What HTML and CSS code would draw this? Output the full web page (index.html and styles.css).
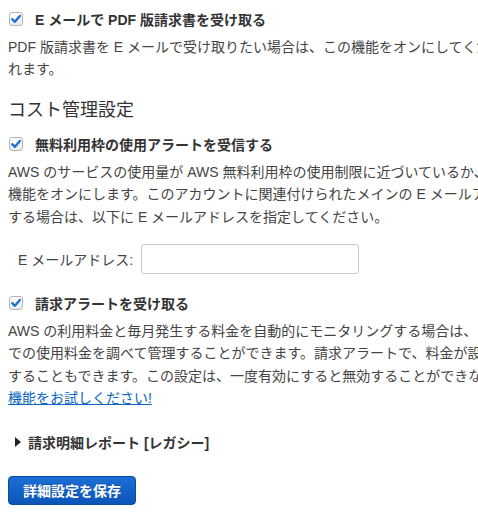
FILE: index.html
```html
<!DOCTYPE html>
<html lang="ja">
<head>
<meta charset="utf-8">
<title>請求設定</title>
<link rel="stylesheet" href="styles.css">
</head>
<body>
<div class="page">
  <label class="check-row">
    <span class="cb"><svg viewBox="0 0 14 14" width="14" height="14"><path d="M3.2 7.2 L5.9 9.8 L10.9 3.9" fill="none" stroke="#1a6fd8" stroke-width="2.3" stroke-linecap="round" stroke-linejoin="round"/></svg></span>
    <span class="check-label">E メールで PDF 版請求書を受け取る</span>
  </label>
  <p class="desc">PDF 版請求書を E メールで受け取りたい場合は、この機能をオンにしてください。PDF 版請求書は毎月 E メールで送信さ<br>れます。</p>

  <h2 class="section-title">コスト管理設定</h2>

  <label class="check-row second">
    <span class="cb"><svg viewBox="0 0 14 14" width="14" height="14"><path d="M3.2 7.2 L5.9 9.8 L10.9 3.9" fill="none" stroke="#1a6fd8" stroke-width="2.3" stroke-linecap="round" stroke-linejoin="round"/></svg></span>
    <span class="check-label">無料利用枠の使用アラートを受信する</span>
  </label>
  <p class="desc">AWS のサービスの使用量が AWS 無料利用枠の使用制限に近づいているか、超えた場合に E メールアラートを受け取るには、この<br>機能をオンにします。このアカウントに関連付けられたメインの E メールアドレス以外のアドレスでアラートを受信<br>する場合は、以下に E メールアドレスを指定してください。</p>

  <div class="email-row">
    <span class="email-label">E メールアドレス:</span>
    <input class="email-input" type="text">
  </div>

  <label class="check-row third">
    <span class="cb"><svg viewBox="0 0 14 14" width="14" height="14"><path d="M3.2 7.2 L5.9 9.8 L10.9 3.9" fill="none" stroke="#1a6fd8" stroke-width="2.3" stroke-linecap="round" stroke-linejoin="round"/></svg></span>
    <span class="check-label">請求アラートを受け取る</span>
  </label>
  <p class="desc">AWS の利用料金と毎月発生する料金を自動的にモニタリングする場合は、この機能をオンにしてください。これにより、請求アラート<br>での使用料金を調べて管理することができます。請求アラートで、料金が設定したしきい値を超えた場合に E メール通知を受信<br>することもできます。この設定は、一度有効にすると無効することができなくなります。今すぐこの<br><a href="#" class="link">機能をお試しください!</a></p>

  <div class="legacy-row">
    <span class="tri"></span>
    <span class="legacy-label">請求明細レポート [レガシー]</span>
  </div>

  <button class="save-btn" type="button">詳細設定を保存</button>
</div>
</body>
</html>
```

FILE: styles.css
```css
html, body {
  margin: 0;
  padding: 0;
  overflow: hidden;
  background: #fff;
}
body {
  font-family: "Liberation Sans", "Noto Sans CJK JP", sans-serif;
  font-size: 14px;
  color: #444;
}
.page {
  width: 1100px;
  padding: 8px 0 0 8px;
}
.check-row {
  display: flex;
  align-items: center;
  height: 22px;
  padding-left: 1px;
}
.second { margin-top: 11px; }
.third { margin-top: 18px; }
.cb {
  width: 14px;
  height: 14px;
  box-sizing: border-box;
  border: 1px solid #b4b4b4;
  border-radius: 3px;
  background: linear-gradient(#ffffff, #ebebeb);
  display: flex;
  align-items: center;
  justify-content: center;
  margin-right: 12px;
}
.cb svg { display: block; margin: -1px; }
.check-label {
  font-weight: bold;
  color: #333;
}
.desc {
  margin: 6px 0 0 0;
  line-height: 22.4px;
  white-space: nowrap;
}
.section-title {
  margin: 17px 0 0 0;
  font-size: 18px;
  font-weight: normal;
  line-height: 24px;
  color: #333;
}
.email-row {
  display: flex;
  align-items: center;
  margin-top: 16px;
  padding-left: 10px;
}
.email-label {
  margin-right: 8px;
}
.email-input {
  width: 218px;
  height: 30px;
  box-sizing: border-box;
  border: 1px solid #c8c8c8;
  border-radius: 3px;
  background: #fff;
  margin: 0;
  padding: 0 6px;
}
.link {
  color: #0b66c2;
  text-decoration: underline;
}
.legacy-row {
  display: flex;
  align-items: center;
  height: 22px;
  margin-top: 21px;
  padding-left: 7px;
}
.tri {
  width: 0;
  height: 0;
  border-top: 5px solid transparent;
  border-bottom: 5px solid transparent;
  border-left: 6px solid #222;
  margin-right: 7px;
}
.legacy-label {
  font-weight: bold;
  color: #333;
}
.save-btn {
  display: block;
  margin-top: 23px;
  width: 128px;
  height: 29px;
  border: 1px solid #0a4aa0;
  border-radius: 4px;
  background: linear-gradient(#1c6fd6, #0b55b8);
  color: #fff;
  font-family: "Liberation Sans", "Noto Sans CJK JP", sans-serif;
  font-size: 14px;
  font-weight: bold;
  padding: 0;
  text-shadow: 0 -1px 0 rgba(0,0,0,0.2);
}
```
